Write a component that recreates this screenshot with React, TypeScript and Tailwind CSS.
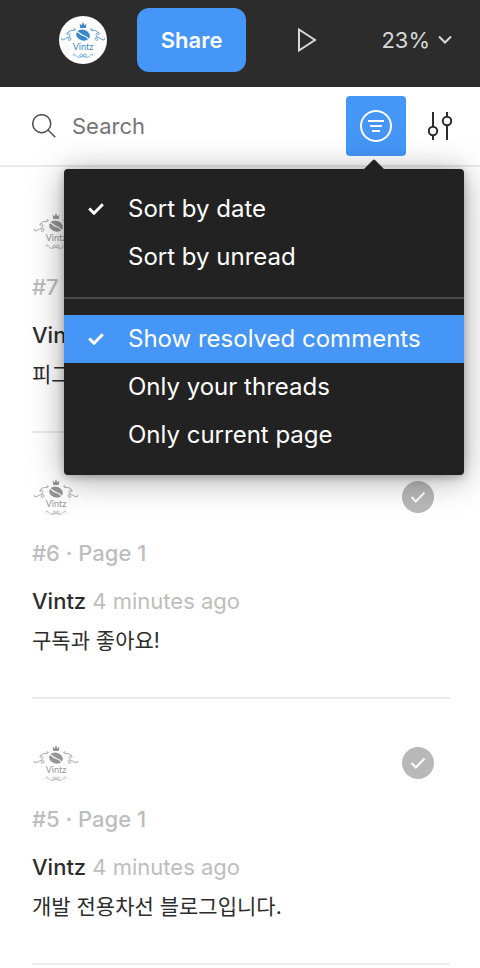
import { useState } from "react";

type Thread = { id: number; page: string; author: string; time: string; text: string };

const threads: Thread[] = [
  { id: 7, page: "Page 1", author: "Vintz", time: "4 minutes ago", text: "피그마" },
  { id: 6, page: "Page 1", author: "Vintz", time: "4 minutes ago", text: "구독과 좋아요!" },
  { id: 5, page: "Page 1", author: "Vintz", time: "4 minutes ago", text: "개발 전용차선 블로그입니다." },
];

function VintzLogo({ className }: { className: string }) {
  return (
    <svg viewBox="0 0 48 48" className={className} role="img" aria-label="Vintz" fill="none" stroke="currentColor" strokeLinecap="round">
      <path d="M21.200 12 20.600 7.500l2 2L24 6l1.400 3.500 2-2-.6 4.500z" fill="currentColor" stroke="none" />
      <ellipse cx="24" cy="19.200" rx="7" ry="5.400" transform="rotate(18 24 19.200)" fill="currentColor" stroke="none" />
      <path d="M17.500 15.500c3 1 3.600 3 6.200 3.800s4.600 1.800 6.200 4.200" stroke="#fff" strokeWidth="1.100" />
      <g strokeWidth="1" opacity="0.8">
        <path d="M2.200 22.500c-.4 1.600 1.600 1.800 2.800 1 1.800-1 3-2 4.800-2.300 2.700-.4 2.700 3.400.4 3.200-1.400-.2-1.300-1.900-.1-1.900M9.800 21c1.700-1.600 1.500-4.300-.8-4.200-1.700.2-1.500 2.400 0 2.200M8.500 16.800c1.500-2.300 3.500-2.300 5.500-2.300 1.800 0 2.600-.6 2.200-1.500-.4-.8-1.500-.3-1.200.5" />
        <path d="M45.800 22.500c.4 1.600-1.600 1.800-2.800 1-1.800-1-3-2-4.800-2.300-2.700-.4-2.700 3.400-.4 3.200 1.400-.2 1.300-1.900.1-1.900M38.200 21c-1.700-1.600-1.500-4.300.8-4.200 1.700.2 1.500 2.400 0 2.200M39.500 16.800c-1.500-2.300-3.500-2.300-5.500-2.300-1.800 0-2.600-.6-2.200-1.500.4-.8 1.500-.3 1.200.5" />
        <path d="M14.500 39.500c-.8-1.500.8-2 1.600-1 1 1.500 2 3 4 2.800 1.800-.2 3.400-1.200 3.400-2.400s-2.700-1.200-2.700.4c0 2 2.800 2.400 3.200.5M33.500 39.500c.8-1.500-.8-2-1.600-1-1 1.500-2 3-4 2.800-1.800-.2-3.400-1.200-3.400-2.400s2.700-1.200 2.700.4c0 2-2.800 2.400-3.200.5" strokeWidth="0.800" />
      </g>
      <text x="24" y="34" textAnchor="middle" fill="currentColor" stroke="none" className="font-[Lato,sans-serif] text-[9px]">
        Vintz
      </text>
    </svg>
  );
}

function MenuItem({ label, checked = false, active = false }: { label: string; checked?: boolean; active?: boolean }) {
  return (
    <button
      type="button"
      role="menuitemcheckbox"
      aria-checked={checked}
      className={`flex h-12 w-full items-center gap-6 px-6 text-left text-2xl text-white ${active ? "bg-[#4596f7]" : ""}`}
    >
      <span className="flex w-4 shrink-0 justify-center">
        {checked && (
          <svg viewBox="0 0 16 12" className="h-3 w-4" fill="none" stroke="currentColor" strokeWidth="3">
            <path d="M1.200 5.500 6 10.200 14.800 1.200" />
          </svg>
        )}
      </span>
      <span className="whitespace-nowrap">{label}</span>
    </button>
  );
}

function ThreadItem({ thread }: { thread: Thread }) {
  return (
    <li className="border-b-2 border-[#ebebeb] py-10 text-[22px] leading-8">
      <div className="flex items-center justify-between pr-4">
        <VintzLogo className="size-12 text-[#959595]" />
        <button type="button" aria-label="Resolved" className="flex size-8 items-center justify-center rounded-full bg-[#b8b8b8] text-white">
          <svg viewBox="0 0 16 12" className="h-3 w-4" fill="none" stroke="currentColor" strokeWidth="2">
            <path d="M1.500 6 5.800 10.500 14.500 1.500" />
          </svg>
        </button>
      </div>
      <p className="mt-4 font-medium text-[#bdbdbd]">
        #{thread.id} · {thread.page}
      </p>
      <p className="mt-4 text-[#bdbdbd]">
        <span className="font-medium text-[#2c2c2c]">{thread.author}</span> {thread.time}
      </p>
      <p className="mt-2 text-[21px] leading-8 text-[#2c2c2c]">{thread.text}</p>
    </li>
  );
}

export default function App() {
  const [query, setQuery] = useState("");
  return (
    <div className="min-h-screen bg-white font-[Inter,'Noto_Sans_CJK_KR',sans-serif]">
      <header className="flex items-center justify-end bg-[#2c2c2c] pt-2 pr-7 pb-[15px] text-[#d9d9d9]">
        <span className="mr-[30px] size-12 overflow-hidden rounded-full bg-white">
          <VintzLogo className="size-12 text-[#3a86cc]" />
        </span>
        <button type="button" className="h-16 rounded-xl bg-[#4596f7] px-6 text-[22px] font-semibold text-white">
          Share
        </button>
        <button type="button" aria-label="Present" className="mr-16 ml-[51px]">
          <svg viewBox="0 0 20 26" className="h-[26px] w-5" fill="none" stroke="currentColor" strokeWidth="2">
            <path d="M2 2.500v21L18 13z" />
          </svg>
        </button>
        <button type="button" className="flex items-center gap-2 text-[22px]">
          23%
          <svg viewBox="0 0 14 10" className="h-[10px] w-[14px]" fill="none" stroke="currentColor" strokeWidth="2">
            <path d="M1 1.500 7 7.500 13 1.500" />
          </svg>
        </button>
      </header>

      <div className="relative flex h-20 items-center border-b-2 border-[#ebebeb] pr-7 pl-8">
        <label htmlFor="search" className="mr-4 text-[#505050]">
          <svg viewBox="0 0 24 24" role="img" aria-label="Search comments" className="size-6" fill="none" stroke="currentColor" strokeWidth="1.500">
            <circle cx="9.700" cy="9.700" r="9" />
            <path d="m16 16 7.300 7.300" />
          </svg>
        </label>
        <input
          id="search"
          type="text"
          value={query}
          onChange={(e) => setQuery(e.target.value)}
          placeholder="Search"
          className="min-w-0 flex-1 bg-transparent text-[22px] text-[#2c2c2c] outline-none placeholder:text-[#757575]"
        />
        <button type="button" aria-label="Filter comments" aria-haspopup="menu" className="mr-[22px] flex size-[60px] items-center justify-center rounded bg-[#4596f7] text-white">
          <svg viewBox="0 0 32 32" className="size-8" fill="none" stroke="currentColor" strokeWidth="2">
            <circle cx="16" cy="16" r="15" />
            <path d="M8 11h16M10 16h12M12 21h8" />
          </svg>
        </button>
        <button type="button" aria-label="Settings" className="text-[#2c2c2c]">
          <svg viewBox="0 0 24 28" className="h-7 w-6" fill="none" stroke="currentColor" strokeWidth="2">
            <path d="M5 0v14M5 24v4M19 0v4M19 14v14" />
            <circle cx="5" cy="19" r="4.200" />
            <circle cx="19" cy="9" r="4.200" />
          </svg>
        </button>

        <div className="absolute top-[82px] right-4 z-10 w-[400px]">
          <svg viewBox="0 0 20 10" className="absolute -top-[10px] right-20 h-[10px] w-5 fill-[#222]">
            <path d="M0 10 9 1q1-1 2 0l9 9z" />
          </svg>
          <div role="menu" className="rounded bg-[#222] py-4 shadow-[0_4px_34px_rgba(0,0,0,0.35),0_2px_8px_rgba(0,0,0,0.25)]">
            <MenuItem label="Sort by date" checked />
            <MenuItem label="Sort by unread" />
            <hr className="my-4 border-t-2 border-[#4a4a4a]" />
            <MenuItem label="Show resolved comments" checked active />
            <MenuItem label="Only your threads" />
            <MenuItem label="Only current page" />
          </div>
        </div>
      </div>

      <ul className="mr-[30px] ml-8">
        {threads.map((t) => (
          <ThreadItem key={t.id} thread={t} />
        ))}
      </ul>
    </div>
  );
}
